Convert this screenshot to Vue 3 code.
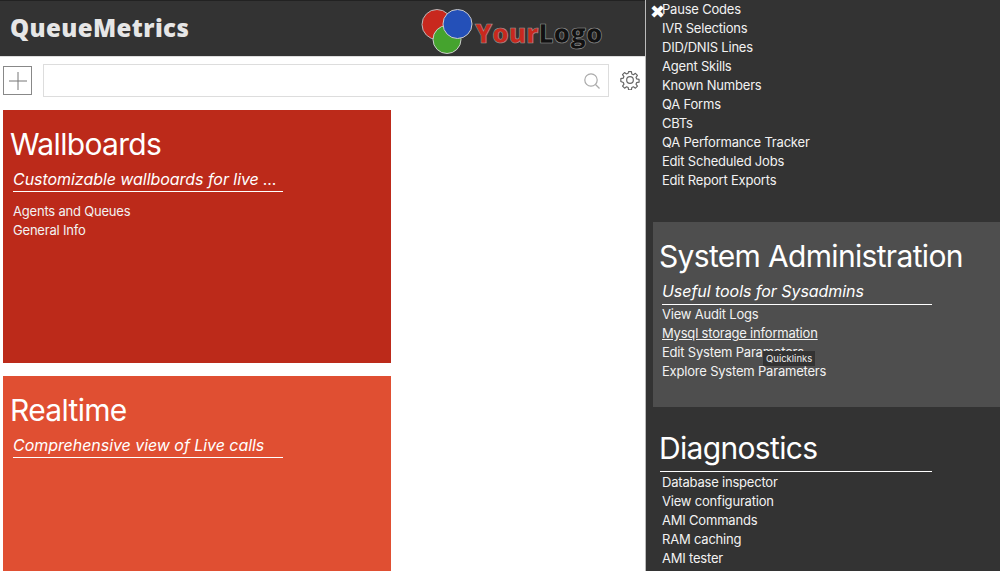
<script setup>
const topLinks = [
  'Pause Codes', 'IVR Selections', 'DID/DNIS Lines', 'Agent Skills', 'Known Numbers',
  'QA Forms', 'CBTs', 'QA Performance Tracker', 'Edit Scheduled Jobs', 'Edit Report Exports'
]
const sysLinks = ['View Audit Logs', 'Mysql storage information', 'Edit System Parameters', 'Explore System Parameters']
const diagLinks = ['Database inspector', 'View configuration', 'AMI Commands', 'RAM caching', 'AMI tester']
</script>

<template>
  <div class="page">
    <header class="topbar">
      <div class="brand">QueueMetrics</div>
      <div class="logo">
        <svg width="54" height="50" viewBox="0 0 54 50">
          <circle cx="16" cy="20.500" r="15" fill="#c8281e" stroke="#bbb" stroke-width="1" />
          <circle cx="26" cy="35.500" r="14" fill="#45a32e" stroke="#ccc" stroke-width="1" />
          <circle cx="36.500" cy="20" r="14.500" fill="#2450b8" stroke="#ccc" stroke-width="1" />
        </svg>
        <span class="logo-text"><span class="your">Your</span><span class="mark">Logo</span></span>
      </div>
    </header>

    <div class="toolbar">
      <button class="add-btn">
        <svg width="18" height="18" viewBox="0 0 18 18"><path d="M9 0V18M0 9H18" stroke="#777" stroke-width="1" fill="none" /></svg>
      </button>
      <div class="search">
        <svg width="18" height="18" viewBox="0 0 18 18" fill="none" stroke="#aaa" stroke-width="1.2">
          <circle cx="8" cy="8" r="6.2" />
          <path d="M12.5 12.5L16.5 16.5" />
        </svg>
      </div>
      <svg class="gear" width="20" height="20" viewBox="0 0 24 24" fill="none" stroke="#666" stroke-width="1.4" stroke-linejoin="round">
        <path d="M10.3 2h3.4l.5 2.9 1.9.8 2.4-1.7 2.4 2.4-1.7 2.4.8 1.9 2.9.5v3.4l-2.9.5-.8 1.9 1.7 2.4-2.4 2.4-2.4-1.7-1.9.8-.5 2.9h-3.4l-.5-2.9-1.9-.8-2.4 1.7-2.4-2.4 1.7-2.4-.8-1.9L1 13.700v-3.400l2.900-.5.8-1.900L3 5.500 5.400 3.100l2.400 1.700 1.900-.8z" />
        <circle cx="12" cy="12" r="4" />
      </svg>
    </div>

    <main class="cards">
      <section class="card wallboards">
        <h2>Wallboards</h2>
        <p class="sub">Customizable wallboards for live ...</p>
        <a>Agents and Queues</a>
        <a>General Info</a>
      </section>
      <section class="card realtime">
        <h2>Realtime</h2>
        <p class="sub">Comprehensive view of Live calls</p>
      </section>
    </main>

    <aside class="panel">
      <span class="close">✖</span>
      <div class="top-links">
        <a v-for="l in topLinks" :key="l">{{ l }}</a>
      </div>
      <section class="block highlighted">
        <h2>System Administration</h2>
        <p class="sub">Useful tools for Sysadmins</p>
        <a v-for="l in sysLinks" :key="l" :class="{ hover: l.startsWith('Mysql') }">{{ l }}</a>
        <span class="tip">Quicklinks</span>
      </section>
      <section class="block diag">
        <h2>Diagnostics</h2>
        <div class="rule"></div>
        <a v-for="l in diagLinks" :key="l">{{ l }}</a>
      </section>
    </aside>
  </div>
</template>

<style scoped>
.page {
  position: relative;
  width: 1000px;
  height: 571px;
  overflow: hidden;
  background: #fff;
  font-family: Inter, "Liberation Sans", sans-serif;
}

.topbar {
  display: flex;
  align-items: center;
  height: 55px;
  padding-left: 10px;
  background: #333;
  border-top: 1px solid #222;
  border-bottom: 1px solid #ddd;
  box-sizing: content-box;
}

.brand {
  width: 411px;
  margin-top: -2px;
  font-family: "Open Sans", sans-serif;
  font-weight: 800;
  font-size: 24px;
  letter-spacing: 0.4px;
  color: #e6e6e6;
}

.logo {
  display: flex;
  align-items: center;
}

.logo-text {
  margin-top: 8px;
  font-family: "Open Sans", sans-serif;
  font-weight: 800;
  font-size: 26px;
  -webkit-text-stroke: 0.6px #999;
}

.your {
  color: #c8281e;
}

.mark {
  color: #111;
}

.toolbar {
  display: flex;
  align-items: center;
  height: 53px;
  padding: 0 0 6px 3px;
  box-sizing: border-box;
}

.add-btn {
  display: flex;
  align-items: center;
  justify-content: center;
  width: 29px;
  height: 29px;
  padding: 0;
  background: #fff;
  border: 1px solid #888;
}

.search {
  display: flex;
  align-items: center;
  justify-content: flex-end;
  width: 566px;
  height: 33px;
  margin-left: 11px;
  padding-right: 7px;
  border: 1px solid #ddd;
  box-sizing: border-box;
}

.gear {
  margin: -1px 0 0 11px;
}

.cards {
  display: flex;
  flex-direction: column;
  gap: 13px;
  padding-left: 3px;
}

.card {
  display: flex;
  flex-direction: column;
  align-items: flex-start;
  flex: none;
  width: 388px;
  height: 253px;
  padding: 17px 8px 0 7px;
  box-sizing: border-box;
  color: #fff;
}

.wallboards {
  background: #bc2a1a;
}

.realtime {
  background: #e04f32;
}

h2 {
  margin: 0;
  font-size: 30px;
  font-weight: 400;
  line-height: 35px;
  letter-spacing: -0.67px;
  color: #fff;
}

.sub {
  width: 270px;
  margin: 7px 0 10px 3px;
  padding: 0 0 1px;
  box-sizing: border-box;
  font-size: 16px;
  line-height: 21px;
  font-style: italic;
  letter-spacing: -0.05px;
  white-space: nowrap;
  color: #fff;
  border-bottom: 1px solid #fff;
}

a {
  display: block;
  margin-left: 3px;
  font-size: 13px;
  line-height: 19px;
  letter-spacing: -0.2px;
  color: #f2f2f2;
}

.panel {
  position: absolute;
  top: 0;
  right: 0;
  width: 355px;
  height: 571px;
  overflow: hidden;
  background: #333;
  border-left: 1px solid #bbb;
  box-sizing: border-box;
  color: #eee;
}

.close {
  position: absolute;
  top: 3px;
  left: 4px;
  font-size: 18px;
  line-height: 18px;
  color: #fff;
}

.top-links {
  padding-left: 13px;
}

.block {
  position: relative;
  margin-left: 7px;
  padding-left: 6px;
}

.highlighted {
  height: 185px;
  margin-top: 32px;
  padding-top: 17px;
  background: #4e4e4e;
  box-sizing: border-box;
}

.diag {
  margin-top: 24px;
}

.highlighted .sub {
  margin: 7px 0 0 3px;
  padding-bottom: 2px;
}

.rule {
  width: 272px;
  height: 1px;
  margin: 5px 0 1px 1px;
  background: #fff;
}

.hover {
  width: fit-content;
  text-decoration: underline;
}

.tip {
  position: absolute;
  top: 129px;
  left: 110px;
  padding: 0 3px;
  font-size: 9.5px;
  line-height: 15px;
  color: #eee;
  background: #333;
}
</style>
